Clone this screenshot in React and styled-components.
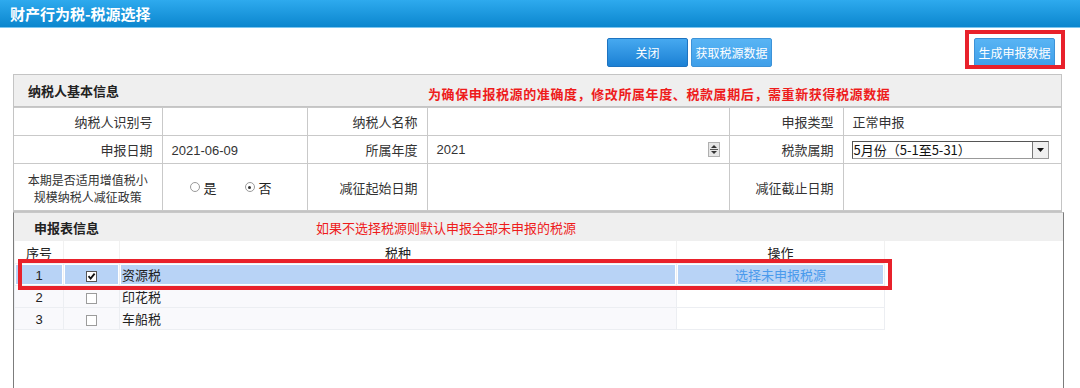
import React from "react";
import styled, { createGlobalStyle, css } from "styled-components";

const GlobalStyle = createGlobalStyle`
  body {
    margin: 0;
    background: #fff;
    font-family: "Liberation Sans", "Noto Sans CJK SC", sans-serif;
    overflow: hidden;
  }
`;

const Page = styled.div`
  width: 1080px;
  height: 388px;
  overflow: hidden;
`;

const TitleBar = styled.div`
  height: 28px;
  display: flex;
  align-items: center;
  padding-left: 10px;
  background: linear-gradient(#2eaaee, #0b86ce);
  border-bottom: 1px solid #7cc6f0;
  color: #fff;
  font-family: "Noto Sans CJK SC", sans-serif;
  font-size: 15px;
  font-weight: bold;
  box-sizing: border-box;
`;

const Toolbar = styled.div`
  display: flex;
  align-items: flex-start;
  gap: 3px;
  height: 29px;
  padding: 10px 25px 0 607px;
  margin-bottom: 7px;
`;

const ActionButton = styled.button`
  width: 81px;
  height: 29px;
  padding: 0;
  white-space: nowrap;
  border-radius: 2px;
  color: #fff;
  font-family: "Noto Sans CJK SC", sans-serif;
  font-size: 12px;
  cursor: pointer;
  border: 1px solid #3c92d8;
  background: linear-gradient(#58b4f4, #3f9fe9);
  ${(p) =>
    p.$primary &&
    css`
      border-color: #1d73c0;
      background: linear-gradient(#46a9f0, #1b80d4);
    `}
`;

const Spacer = styled.div`
  flex: 1;
`;

const Marked = styled.div`
  position: relative;
`;

const RedFrame = styled.div`
  position: absolute;
  box-sizing: border-box;
  border: 4px solid #e8212b;
  pointer-events: none;
  left: ${(p) => p.$left}px;
  top: ${(p) => p.$top}px;
  width: ${(p) => p.$w}px;
  height: ${(p) => p.$h}px;
`;

const Panel = styled.section`
  position: relative;
  margin-left: 13px;
  width: 1049px;
  box-sizing: border-box;
  border: 1px solid #c4c4c4;
  ${(p) =>
    p.$open &&
    css`
      width: 1051px;
      height: 177px;
      border-color: #c8c8c8 #7c7c7c;
      border-bottom: none;
    `}
`;

const PanelHead = styled.div`
  display: flex;
  align-items: center;
  height: ${(p) => p.$h}px;
  background: #efefef;
  border-bottom: 1px solid #c4c4c4;
  padding-left: ${(p) => p.$pad}px;
  font-family: "Noto Sans CJK SC", sans-serif;
  ${(p) =>
    p.$flat &&
    css`
      border-bottom: none;
    `}
`;

const HeadTitle = styled.span`
  font-size: 13px;
  font-weight: bold;
  color: #222;
  width: ${(p) => p.$w}px;
`;

const Notice = styled.span`
  font-size: 13px;
  color: #ee1c1c;
  margin-top: ${(p) => (p.$bold ? 5 : 0)}px;
  font-weight: ${(p) => (p.$bold ? "bold" : "normal")};
  letter-spacing: ${(p) => (p.$bold ? "0.6px" : "0")};
`;

const InfoTable = styled.table`
  width: 100%;
  border-collapse: collapse;
  table-layout: fixed;
  font-size: 13px;
  color: #333;
`;

const InfoRow = styled.tr`
  height: ${(p) => p.$h}px;
`;

const Cell = styled.td`
  border: 1px solid #c9c9c9;
  padding: 0 9px;
  text-align: ${(p) => (p.$label ? "right" : "left")};
  font-family: "Noto Sans CJK SC", sans-serif;
  &:first-child {
    border-left: none;
  }
  &:last-child {
    border-right: none;
  }
  ${(p) =>
    p.$noLeft &&
    css`
      border-left-color: transparent;
    `}
`;

const StackedLabel = styled.div`
  display: flex;
  flex-direction: column;
  align-items: center;
  font-size: 12px;
  line-height: 17px;
  margin: 2px -5px 0;
`;

const Num = styled.span`
  font-family: "Liberation Sans", sans-serif;
`;

const YearBox = styled.div`
  display: flex;
  align-items: center;
  justify-content: space-between;
`;

const Spinner = () => (
  <svg width="12" height="15" viewBox="0 0 12 15">
    <rect x="0.5" y="0.5" width="11" height="14" fill="#e6e6e6" stroke="#b0b0b0" />
    <path d="M3 6 L6 3 L9 6 Z" fill="#333" />
    <path d="M3 9 L6 12 L9 9 Z" fill="#333" />
    <line x1="2" y1="7.5" x2="10" y2="7.5" stroke="#555" />
  </svg>
);

const SelectBox = styled.div`
  display: flex;
  align-items: center;
  width: 197px;
  height: 18px;
  box-sizing: border-box;
  border: 1px solid #555;
  border-right-color: #999;
  border-bottom-color: #999;
  font-size: 13px;
  color: #111;
  margin-left: -1px;
`;

const SelectText = styled.span`
  flex: 1;
  padding-left: 1px;
  white-space: nowrap;
`;

const SelectArrow = styled.span`
  display: flex;
  align-items: center;
  justify-content: center;
  width: 15px;
  height: 16px;
  background: #f0f0f0;
  border-left: 1px solid #777;
`;

const RadioGroup = styled.div`
  display: flex;
  align-items: center;
  padding-left: 18px;
  gap: 28px;
`;

const RadioItem = styled.label`
  display: flex;
  align-items: center;
  gap: 4px;
  font-size: 13px;
  color: #222;
`;

const RadioDot = styled.span`
  width: 8px;
  height: 8px;
  border-radius: 50%;
  border: 1px solid #9a9a9a;
  background: #fff;
  display: flex;
  align-items: center;
  justify-content: center;
  &::after {
    content: "";
    width: 3px;
    height: 3px;
    border-radius: 50%;
    background: ${(p) => (p.$on ? "#333" : "transparent")};
  }
`;

const TaxTable = styled.table`
  width: 871px;
  border-collapse: collapse;
  table-layout: fixed;
  font-size: 13px;
  font-family: "Noto Sans CJK SC", sans-serif;
  color: #222;
`;

const TaxRow = styled.tr`
  height: 22px;
  td {
    background: ${(p) => (p.$selected ? "#b8d3f6" : "#f9f9fc")};
    box-shadow: ${(p) => (p.$selected ? "inset 0 0 0 1px #fff" : "none")};
  }
  td:last-child {
    background: ${(p) => (p.$selected ? "#b8d3f6" : "#fff")};
  }
`;

const HeadCell = styled.th`
  height: 22px;
  font-weight: normal;
  font-size: 13px;
  color: #222;
  text-align: center;
  border: 1px solid #f1f1f1;
  border-top: none;
  background: #fff;
  padding: 0;
`;

const TaxCell = styled.td`
  border: 1px solid #eceef2;
  padding: 0 2px;
  text-align: ${(p) => p.$align || "center"};
`;

const LinkText = styled.span`
  color: #4a9aec;
`;

const CheckBox = ({ checked }) => (
  <svg width="11" height="11" viewBox="0 0 11 11" style={{ verticalAlign: "middle" }}>
    <rect x="0.5" y="0.5" width="10" height="10" fill="#fff" stroke={checked ? "#555" : "#9c9c9c"} />
    {checked && <path d="M2.5 5.2 L4.6 7.6 L8.6 2.6" fill="none" stroke="#111" strokeWidth="1.8" />}
  </svg>
);

const taxes = [
  { no: 1, name: "资源税", checked: true, action: "选择未申报税源" },
  { no: 2, name: "印花税", checked: false, action: "" },
  { no: 3, name: "车船税", checked: false, action: "" },
];

export default function App() {
  return (
    <Page>
      <GlobalStyle />
      <TitleBar>财产行为税-税源选择</TitleBar>

      <Toolbar>
        <ActionButton $primary>关闭</ActionButton>
        <ActionButton>获取税源数据</ActionButton>
        <Spacer />
        <Marked>
          <ActionButton>生成申报数据</ActionButton>
          <RedFrame $left={-9} $top={-8} $w={100} $h={39} />
        </Marked>
      </Toolbar>

      <Panel>
        <PanelHead $h={31} $pad={14}>
          <HeadTitle $w={400}>纳税人基本信息</HeadTitle>
          <Notice $bold>为确保申报税源的准确度，修改所属年度、税款属期后，需重新获得税源数据</Notice>
        </PanelHead>
        <InfoTable>
          <colgroup>
            <col style={{ width: 148 }} />
            <col style={{ width: 145 }} />
            <col style={{ width: 120 }} />
            <col style={{ width: 302 }} />
            <col style={{ width: 114 }} />
            <col />
          </colgroup>
          <tbody>
            <InfoRow $h={28}>
              <Cell $label>纳税人识别号</Cell>
              <Cell $noLeft />
              <Cell $label>纳税人名称</Cell>
              <Cell />
              <Cell $label>申报类型</Cell>
              <Cell>正常申报</Cell>
            </InfoRow>
            <InfoRow $h={28}>
              <Cell $label>申报日期</Cell>
              <Cell>
                <Num>2021-06-09</Num>
              </Cell>
              <Cell $label>所属年度</Cell>
              <Cell>
                <YearBox>
                  <Num>2021</Num>
                  <Spinner />
                </YearBox>
              </Cell>
              <Cell $label>税款属期</Cell>
              <Cell>
                <SelectBox>
                  <SelectText>5月份（5-1至5-31）</SelectText>
                  <SelectArrow>
                    <svg width="7" height="4" viewBox="0 0 7 4">
                      <path d="M0 0 L7 0 L3.5 4 Z" fill="#111" />
                    </svg>
                  </SelectArrow>
                </SelectBox>
              </Cell>
            </InfoRow>
            <InfoRow $h={47}>
              <Cell>
                <StackedLabel>
                  <span>本期是否适用增值税小</span>
                  <span>规模纳税人减征政策</span>
                </StackedLabel>
              </Cell>
              <Cell>
                <RadioGroup>
                  <RadioItem>
                    <RadioDot />是
                  </RadioItem>
                  <RadioItem>
                    <RadioDot $on />否
                  </RadioItem>
                </RadioGroup>
              </Cell>
              <Cell $label>减征起始日期</Cell>
              <Cell />
              <Cell $label>减征截止日期</Cell>
              <Cell />
            </InfoRow>
          </tbody>
        </InfoTable>
      </Panel>

      <Panel $open>
        <PanelHead $h={28} $pad={20} $flat>
          <HeadTitle $w={282}>申报表信息</HeadTitle>
          <Notice>如果不选择税源则默认申报全部未申报的税源</Notice>
        </PanelHead>
        <TaxTable>
          <colgroup>
            <col style={{ width: 49 }} />
            <col style={{ width: 56 }} />
            <col style={{ width: 557 }} />
            <col />
          </colgroup>
          <thead>
            <tr>
              <HeadCell>序号</HeadCell>
              <HeadCell />
              <HeadCell>税种</HeadCell>
              <HeadCell>操作</HeadCell>
            </tr>
          </thead>
          <tbody>
            {taxes.map((t) => (
              <TaxRow key={t.no} $selected={t.checked}>
                <TaxCell>
                  <Num>{t.no}</Num>
                </TaxCell>
                <TaxCell>
                  <CheckBox checked={t.checked} />
                </TaxCell>
                <TaxCell $align="left">{t.name}</TaxCell>
                <TaxCell>
                  <LinkText>{t.action}</LinkText>
                </TaxCell>
              </TaxRow>
            ))}
          </tbody>
        </TaxTable>
        <RedFrame $left={4} $top={46} $w={874} $h={31} />
      </Panel>
    </Page>
  );
}
